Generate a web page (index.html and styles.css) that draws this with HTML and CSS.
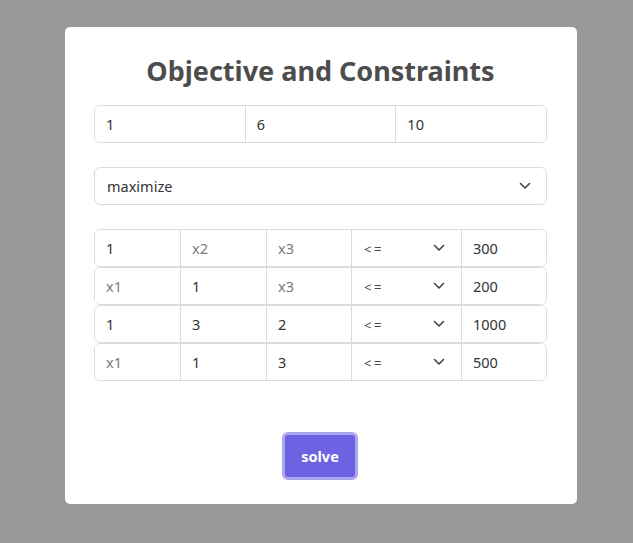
FILE: index.html
```html
<!DOCTYPE html>
<html>
<head>
<meta charset="utf-8">
<link rel="stylesheet" href="styles.css">
</head>
<body>
<div class="card">
  <h1 class="title">Objective and Constraints</h1>
  <div class="group">
    <input class="field" value="1">
    <input class="field" value="6">
    <input class="field" value="10">
  </div>
  <div class="select-wrap wide">
    <select class="select"><option>maximize</option><option>minimize</option></select>
    <svg class="chev" width="12" height="8" viewBox="0 0 12 8"><path d="M1.5 1.5 L6 6 L10.5 1.5" fill="none" stroke="#444" stroke-width="1.6" stroke-linecap="round" stroke-linejoin="round"/></svg>
  </div>
  <div class="rows">
    <div class="group row">
      <input class="field c" value="1">
      <input class="field c" placeholder="x2">
      <input class="field c" placeholder="x3">
      <div class="select-wrap op"><select class="select small"><option>&lt;=</option></select><svg class="chev" width="12" height="8" viewBox="0 0 12 8"><path d="M1.5 1.5 L6 6 L10.5 1.5" fill="none" stroke="#444" stroke-width="1.6" stroke-linecap="round" stroke-linejoin="round"/></svg></div>
      <input class="field c" value="300">
    </div>
    <div class="group row">
      <input class="field c" placeholder="x1">
      <input class="field c" value="1">
      <input class="field c" placeholder="x3">
      <div class="select-wrap op"><select class="select small"><option>&lt;=</option></select><svg class="chev" width="12" height="8" viewBox="0 0 12 8"><path d="M1.5 1.5 L6 6 L10.5 1.5" fill="none" stroke="#444" stroke-width="1.6" stroke-linecap="round" stroke-linejoin="round"/></svg></div>
      <input class="field c" value="200">
    </div>
    <div class="group row">
      <input class="field c" value="1">
      <input class="field c" value="3">
      <input class="field c" value="2">
      <div class="select-wrap op"><select class="select small"><option>&lt;=</option></select><svg class="chev" width="12" height="8" viewBox="0 0 12 8"><path d="M1.5 1.5 L6 6 L10.5 1.5" fill="none" stroke="#444" stroke-width="1.6" stroke-linecap="round" stroke-linejoin="round"/></svg></div>
      <input class="field c" value="1000">
    </div>
    <div class="group row">
      <input class="field c" placeholder="x1">
      <input class="field c" value="1">
      <input class="field c" value="3">
      <div class="select-wrap op"><select class="select small"><option>&lt;=</option></select><svg class="chev" width="12" height="8" viewBox="0 0 12 8"><path d="M1.5 1.5 L6 6 L10.5 1.5" fill="none" stroke="#444" stroke-width="1.6" stroke-linecap="round" stroke-linejoin="round"/></svg></div>
      <input class="field c" value="500">
    </div>
  </div>
  <div class="actions">
    <button class="btn">solve</button>
  </div>
</div>
</body>
</html>
```
FILE: styles.css
```css
* { box-sizing: border-box; }
html, body { margin: 0; padding: 0; }
body {
  background: #989898;
  font-family: "Noto Sans", "Open Sans", sans-serif;
  width: 633px;
  height: 543px;
  padding-top: 27px;
  padding-left: 65px;
}
.card {
  width: 512px;
  height: 477px;
  background: #fff;
  border-radius: 5px;
  padding: 26px 30px 0 29px;
}
.title {
  margin: 0 0 16px 0;
  text-align: center;
  font-size: 27px;
  line-height: 36px;
  font-weight: 700;
  color: #4d4d4d;
}
.group {
  display: flex;
  height: 38px;
  border: 1px solid #dcdcdc;
  border-radius: 6px;
  overflow: hidden;
}
.field {
  flex: 1 1 0;
  min-width: 0;
  height: 100%;
  border: none;
  border-left: 1px solid #dcdcdc;
  padding: 0 11px;
  font-family: inherit;
  font-size: 14.5px;
  color: #333;
  background: #fff;
  outline: none;
}
.field:first-child { border-left: none; }
.field::placeholder { color: #7a7a7a; }
.select-wrap { position: relative; }
.wide {
  margin-top: 24px;
  height: 38px;
}
.select {
  appearance: none;
  -webkit-appearance: none;
  width: 100%;
  height: 100%;
  border: 1px solid #dcdcdc;
  border-radius: 6px;
  background: #fff;
  padding: 0 12px;
  font-family: inherit;
  font-size: 14.5px;
  color: #333;
  outline: none;
}
.chev {
  position: absolute;
  right: 16px;
  top: 50%;
  margin-top: -4px;
  pointer-events: none;
}
.rows {
  margin-top: 24px;
  display: flex;
  flex-direction: column;
}
.row .c { flex: 0 0 86px; }
.row .c:first-child { flex: 0 0 85px; }
.row .c:nth-child(3) { flex: 0 0 85px; }
.row .c:last-child { flex: 1 1 auto; }
.op {
  flex: 0 0 110px;
  height: 100%;
  border-left: 1px solid #dcdcdc;
}
.select.small {
  border: none;
  border-radius: 0;
  padding: 1px 0 0 12px;
  font-size: 13px;
  line-height: 36px;
  color: #444;
  letter-spacing: 2.5px;
}
.op .chev { right: 16px; }
.actions {
  display: flex;
  justify-content: center;
  margin-top: 51px;
}
.btn {
  width: 76px;
  height: 48px;
  flex: 0 0 76px;
  border: 3px solid #aca6f1;
  border-radius: 6px;
  background: #6d63e2;
  color: #fff;
  font-family: inherit;
  font-size: 14.5px;
  font-weight: 700;
  margin-left: -1px;
  padding: 0;
}
```
